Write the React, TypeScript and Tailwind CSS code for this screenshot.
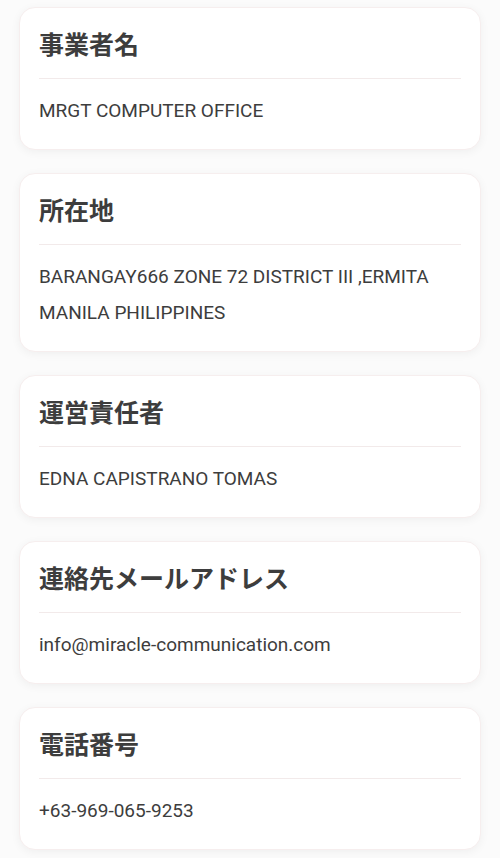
const rows: { title: string; lines: string[] }[] = [
  { title: "事業者名", lines: ["MRGT COMPUTER OFFICE"] },
  { title: "所在地", lines: ["BARANGAY666 ZONE 72 DISTRICT III ,ERMITA", "MANILA PHILIPPINES"] },
  { title: "運営責任者", lines: ["EDNA CAPISTRANO TOMAS"] },
  { title: "連絡先メールアドレス", lines: ["info@miracle-communication.com"] },
  { title: "電話番号", lines: ["+63-969-065-9253"] },
];

export default function App() {
  return (
    <div
      className="min-h-[858px] w-[500px] bg-[#fbfbfb] px-[19px] pt-[7px] pb-6 text-[#3d3d3d]"
      style={{ fontFamily: 'Roboto, "Noto Sans CJK JP", sans-serif' }}
    >
      <div className="flex flex-col gap-[23px]">
        {rows.map((r) => (
          <section
            key={r.title}
            className="rounded-2xl border border-[#f6eeee] bg-white px-[19px] pt-5 pb-5 shadow-[0_2px_10px_rgba(0,0,0,0.05)]"
          >
            <h2 className="border-b border-[#f2eaea] pb-3.5 text-[25px] leading-9 font-bold">{r.title}</h2>
            <div className="mt-3.5 text-[19px] leading-9">
              {r.lines.map((l) => (
                <p key={l}>{l}</p>
              ))}
            </div>
          </section>
        ))}
      </div>
    </div>
  );
}
